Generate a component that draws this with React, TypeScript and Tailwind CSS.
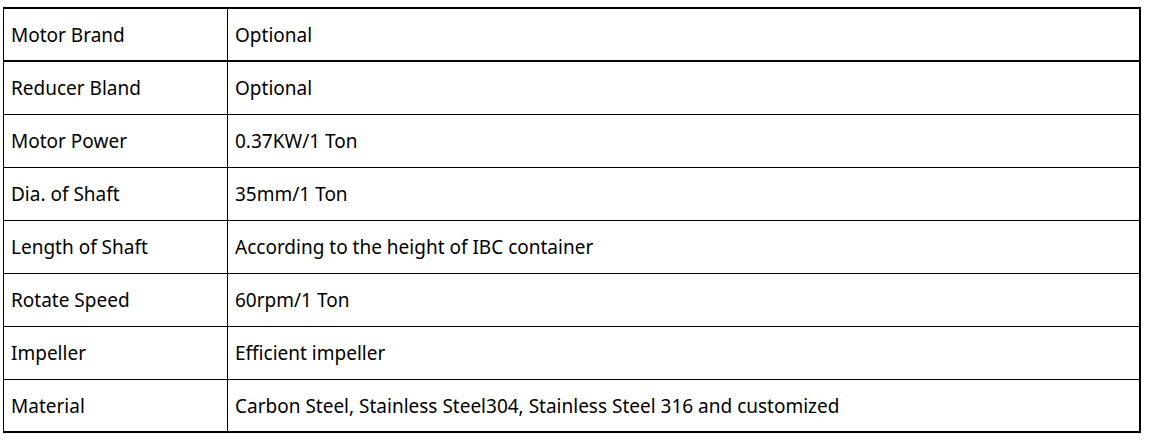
const ROWS: [string, string][] = [
  ["Motor Brand", "Optional"],
  ["Reducer Bland", "Optional"],
  ["Motor Power", "0.37KW/1 Ton"],
  ["Dia. of Shaft", "35mm/1 Ton"],
  ["Length of Shaft", "According to the height of IBC container"],
  ["Rotate Speed", "60rpm/1 Ton"],
  ["Impeller", "Efficient impeller"],
  ["Material", "Carbon Steel, Stainless Steel304, Stainless Steel 316 and customized"],
];

export default function App() {
  return (
    <div className="w-[1153px] h-[448px] bg-white pl-[3px] pt-[7px] font-['Noto_Sans',sans-serif] text-[19px] text-black">
      <div className="w-[1138px] border-t-2 border-r-2 border-b-2 border-l border-black">
        {ROWS.map(([label, value], idx) => {
          const first = idx == 0;
          const last = idx == ROWS.length - 1;
          return (
            <div
              key={label}
              className={
                first
                  ? "flex h-[53px] border-b-2 border-black"
                  : last
                    ? "flex h-[51px]"
                    : "flex h-[53px] border-b border-black"
              }
            >
              <div className="w-[224px] shrink-0 border-r border-black pl-[7px] flex items-center pt-px">
                {label}
              </div>
              <div className="flex-1 pl-[7px] flex items-center pt-px">{value}</div>
            </div>
          );
        })}
      </div>
    </div>
  );
}
